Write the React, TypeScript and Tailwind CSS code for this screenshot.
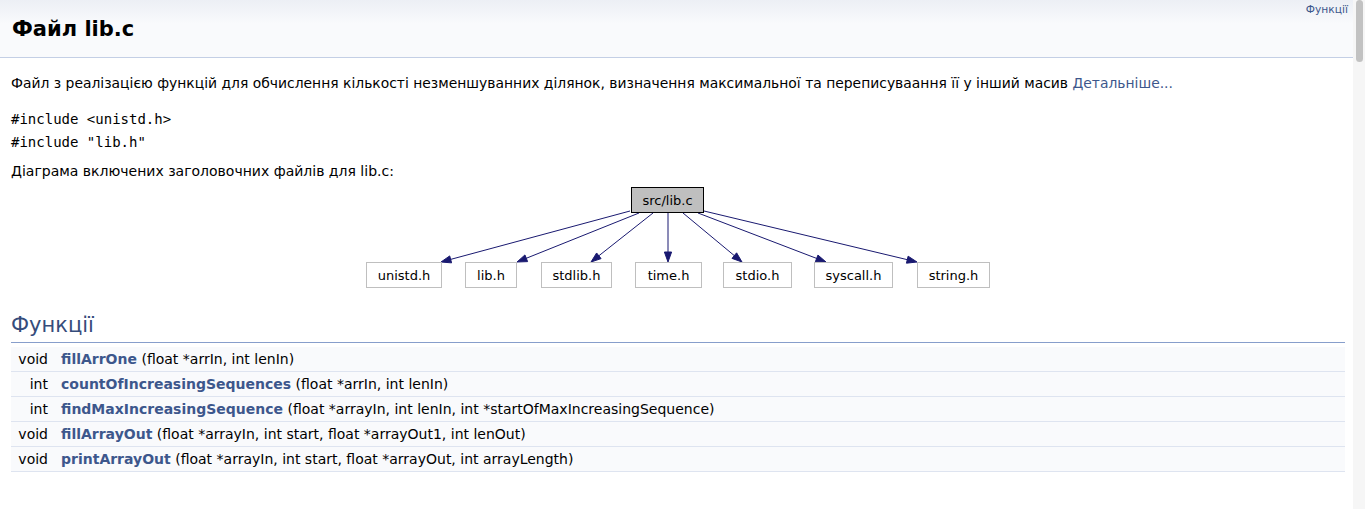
import React from 'react';

type Node = { label: string; x: number; w: number };
type Edge = { x1: number; y1: number; x2: number; y2: number };

const leaves: Node[] = [
  { label: 'unistd.h', x: 367, w: 75 },
  { label: 'lib.h', x: 466, w: 51 },
  { label: 'stdlib.h', x: 542, w: 70 },
  { label: 'time.h', x: 636, w: 66 },
  { label: 'stdio.h', x: 724, w: 68 },
  { label: 'syscall.h', x: 815, w: 78 },
  { label: 'string.h', x: 918, w: 72 },
];

const edges: Edge[] = [
  { x1: 631, y1: 211, x2: 442, y2: 262 },
  { x1: 640, y1: 213, x2: 518, y2: 262 },
  { x1: 654, y1: 213, x2: 592, y2: 262 },
  { x1: 669, y1: 213, x2: 669, y2: 262 },
  { x1: 684, y1: 213, x2: 743, y2: 262 },
  { x1: 699, y1: 213, x2: 827, y2: 262 },
  { x1: 705, y1: 211, x2: 918, y2: 262 },
];

const functions = [
  { type: 'void', name: 'fillArrOne', args: '(float *arrIn, int lenIn)' },
  { type: 'int', name: 'countOfIncreasingSequences', args: '(float *arrIn, int lenIn)' },
  { type: 'int', name: 'findMaxIncreasingSequence', args: '(float *arrayIn, int lenIn, int *startOfMaxIncreasingSequence)' },
  { type: 'void', name: 'fillArrayOut', args: '(float *arrayIn, int start, float *arrayOut1, int lenOut)' },
  { type: 'void', name: 'printArrayOut', args: '(float *arrayIn, int start, float *arrayOut, int arrayLength)' },
];

// unit vector of an edge, used for the arrow head
const dir = (e: Edge) => {
  const dx = e.x2 - e.x1;
  const dy = e.y2 - e.y1;
  const len = Math.sqrt(dx * dx + dy * dy);
  return { ux: dx / len, uy: dy / len };
};

const arrowHead = (e: Edge) => {
  const { ux, uy } = dir(e);
  const bx = e.x2 - ux * 10;
  const by = e.y2 - uy * 10;
  const px = -uy * 3.6;
  const py = ux * 3.6;
  return `${e.x2},${e.y2} ${bx + px},${by + py} ${bx - px},${by - py}`;
};

const IncludeGraph: React.FC = () => (
  <svg width="626" height="104" viewBox="366 186 626 104" className="mx-auto block">
    {edges.map((e, i) => {
      const { ux, uy } = dir(e);
      return (
        <g key={i}>
          <line x1={e.x1} y1={e.y1} x2={e.x2 - ux * 9} y2={e.y2 - uy * 9} stroke="#191970" strokeWidth="1" />
          <polygon points={arrowHead(e)} fill="#191970" stroke="#191970" strokeWidth="1" />
        </g>
      );
    })}
    <rect x="632.5" y="187.5" width="72" height="25" fill="#bfbfbf" stroke="#000" strokeWidth="1" />
    <text x="668.5" y="204.5" textAnchor="middle" fontFamily="DejaVu Sans, sans-serif" fontSize="13" fill="#000">src/lib.c</text>
    {leaves.map(n => (
      <g key={n.label}>
        <rect x={n.x + 0.5} y="262.5" width={n.w} height="25" fill="#fff" stroke="#bfbfbf" strokeWidth="1" />
        <text x={n.x + n.w / 2 + 0.5} y="280" textAnchor="middle" fontFamily="DejaVu Sans, sans-serif" fontSize="13" fill="#000">{n.label}</text>
      </g>
    ))}
  </svg>
);

export default function App() {
  return (
    <div className="flex h-[509px] w-[1365px] overflow-hidden bg-white font-['DejaVu_Sans',sans-serif] text-black">
      <div className="flex-1 min-w-0">
        <div className="h-[58px] border-b border-[#c4cfe5] bg-[linear-gradient(to_bottom,#eceff5,#f9fafc_24px)] flex justify-between">
          <h1 className="pl-[12px] pt-[15px] text-[21px] leading-[28px] font-bold">Файл lib.c</h1>
          <a className="pr-[5px] pt-[3px] text-[10.7px] leading-[14px] text-[#3d578c]">Функції</a>
        </div>

        <div className="ml-[11px] mr-[8px]">
          <p className="mt-[14px] text-[13.9px] leading-[22px]">
            Файл з реалізацією функцій для обчислення кількості незменшуванних ділянок, визначення максимальної та переписуваання її у інший масив{' '}
            <a className="text-[#3d578c]">Детальніше...</a>
          </p>

          <div className="mt-[14px] font-['DejaVu_Sans_Mono',monospace] text-[14px]">
            <div className="leading-[23px]">#include &lt;unistd.h&gt;</div>
            <div className="leading-[23px]">#include "lib.h"</div>
          </div>

          <p className="mt-[6px] text-[14px] leading-[22px]">Діаграма включених заголовочних файлів для lib.c:</p>

          <div className="mt-[4px]">
            <IncludeGraph />
          </div>

          <h2 className="mt-[22px] pb-[4px] border-b border-[#879ecb] text-[21px] leading-[26px] font-normal text-[#354c7b]">Функції</h2>

          <div className="mt-[4px] text-[14px]">
            {functions.map(f => (
              <div key={f.name} className="flex h-[25px] items-center border-b border-[#dee4f0] bg-[#f9fafc]">
                <div className="w-[42px] pr-[5px] text-right">{f.type}</div>
                <div className="pl-[8px]">
                  <a className="font-bold text-[#3d578c]">{f.name}</a> {f.args}
                </div>
              </div>
            ))}
          </div>
        </div>
      </div>

      <div className="w-[12px] bg-[#f6f6f6] flex justify-center">
        <div className="w-[7px] h-[62px] rounded-full bg-[#c2c2c2]" />
      </div>
    </div>
  );
}
